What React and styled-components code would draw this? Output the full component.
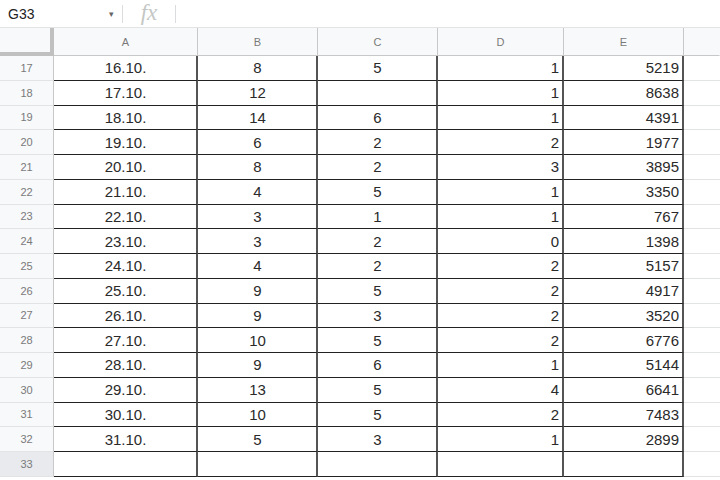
import React from "react";
import styled, { createGlobalStyle } from "styled-components";

const rows = [
  [17, "16.10.", "8", "5", "1", "5219"],
  [18, "17.10.", "12", "", "1", "8638"],
  [19, "18.10.", "14", "6", "1", "4391"],
  [20, "19.10.", "6", "2", "2", "1977"],
  [21, "20.10.", "8", "2", "3", "3895"],
  [22, "21.10.", "4", "5", "1", "3350"],
  [23, "22.10.", "3", "1", "1", "767"],
  [24, "23.10.", "3", "2", "0", "1398"],
  [25, "24.10.", "4", "2", "2", "5157"],
  [26, "25.10.", "9", "5", "2", "4917"],
  [27, "26.10.", "9", "3", "2", "3520"],
  [28, "27.10.", "10", "5", "2", "6776"],
  [29, "28.10.", "9", "6", "1", "5144"],
  [30, "29.10.", "13", "5", "4", "6641"],
  [31, "30.10.", "10", "5", "2", "7483"],
  [32, "31.10.", "5", "3", "1", "2899"],
  [33, "", "", "", "", ""],
];

const columns = ["A", "B", "C", "D", "E"];
const aligns = ["center", "center", "center", "right", "right"];

export default function App() {
  return (
    <>
      <GlobalStyle />
      <Sheet>
        <FormulaBar>
          <NameBox>
            <span>G33</span>
            <Caret>▾</Caret>
          </NameBox>
          <Divider />
          <Fx>fx</Fx>
          <Divider />
        </FormulaBar>
        <Grid>
          <Corner />
          {columns.map((c) => (
            <ColHeader key={c}>{c}</ColHeader>
          ))}
          <ColHeader $blank />
          {rows.map((r) => (
            <React.Fragment key={r[0]}>
              <RowHeader $selected={r[0] === 33}>{r[0]}</RowHeader>
              {r.slice(1).map((v, i) => (
                <Cell key={i} $align={aligns[i]}>
                  {v}
                </Cell>
              ))}
              <EmptyCell />
            </React.Fragment>
          ))}
        </Grid>
      </Sheet>
    </>
  );
}

const GlobalStyle = createGlobalStyle`
  body {
    margin: 0;
    background: #fff;
    font-family: "Liberation Sans", Arial, sans-serif;
  }
`;

const Sheet = styled.div`
  width: 720px;
  height: 480px;
  overflow: hidden;
  display: flex;
  flex-direction: column;
`;

const FormulaBar = styled.div`
  height: 28px;
  box-sizing: border-box;
  border-bottom: 1px solid #e2e3e3;
  display: flex;
  align-items: center;
`;

const NameBox = styled.div`
  width: 122px;
  box-sizing: border-box;
  padding: 0 8px;
  display: flex;
  align-items: center;
  justify-content: space-between;
  font-size: 14px;
  color: #222;
`;

const Caret = styled.span`
  font-size: 9px;
  color: #666;
`;

const Divider = styled.div`
  width: 1px;
  height: 18px;
  background: #dadce0;
`;

const Fx = styled.div`
  width: 52px;
  text-align: center;
  font-family: "Liberation Serif", "Times New Roman", serif;
  font-style: italic;
  font-size: 23px;
  color: #c4c7c5;
  line-height: 1;
  margin-top: -3px;
`;

const Grid = styled.div`
  display: grid;
  grid-template-columns: 54px 144px 120px 120px 126px 120px 1fr;
  grid-template-rows: 28px repeat(17, 24.75px);
`;

const Corner = styled.div`
  background: #f8f9fa;
  box-sizing: border-box;
  border-right: 4px solid #c0c0c0;
  border-bottom: 4px solid #c0c0c0;
`;

const ColHeader = styled.div`
  background: #f8f9fa;
  box-sizing: border-box;
  border-right: 1px solid ${(p) => (p.$blank ? "transparent" : "#c8c8c8")};
  border-bottom: 1px solid #c8c8c8;
  display: flex;
  align-items: center;
  justify-content: center;
  font-size: 11px;
  color: #7a7a7a;
`;

const RowHeader = styled.div`
  background: ${(p) => (p.$selected ? "#e8eaed" : "#f8f9fa")};
  box-sizing: border-box;
  border-right: 1px solid #c8c8c8;
  border-bottom: 1px solid #e2e3e3;
  display: flex;
  align-items: center;
  justify-content: center;
  font-size: 11px;
  color: #7a7a7a;
`;

const Cell = styled.div`
  box-sizing: border-box;
  border-right: 2px solid #555;
  border-bottom: 1px solid #222;
  display: flex;
  align-items: center;
  justify-content: ${(p) => (p.$align === "right" ? "flex-end" : "center")};
  padding: 0 3px 0 4px;
  font-size: 15px;
  color: #2a2a2a;
`;

const EmptyCell = styled.div`
  box-sizing: border-box;
  border-bottom: 1px solid #e2e3e3;
`;
